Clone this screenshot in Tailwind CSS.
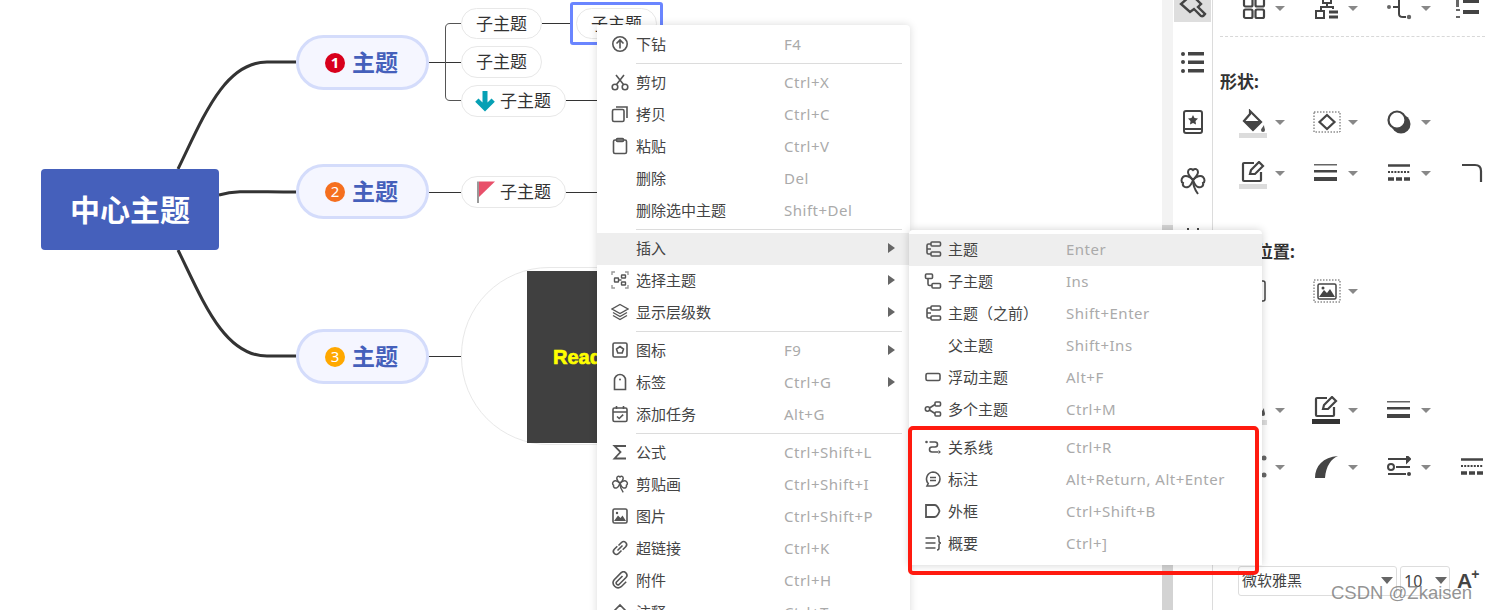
<!DOCTYPE html>
<html lang="zh">
<head>
<meta charset="utf-8">
<script src="https://cdn.jsdelivr.net/npm/@tailwindcss/browser@4"></script>
</head>
<body class="m-0 bg-white">
<div class="relative flex w-[1485px] h-[610px] overflow-hidden bg-white font-['Noto_Sans','Noto_Sans_CJK_SC',sans-serif] text-[#444]">

  <!-- canvas -->
  <div class="relative w-[1162px] h-full shrink-0">
    <svg class="absolute left-0 top-0" width="1162" height="610" fill="none" stroke="#333">
      <path d="M178 169C203 118 224 62 267 62H296" stroke-width="3"/>
      <path d="M219 195C238 190 252 192 296 192" stroke-width="3"/>
      <path d="M178 250C203 301 224 356 267 356H296" stroke-width="3"/>
      <path d="M429 62.500H461M429 192.500H461M429 356.500H461M542 23.500H570M566 100.500H597M566 192.500H597"/>
      <path d="M461 23.500H450Q445.500 23.500 445.500 28V96Q445.500 100.500 450 100.500H461" stroke="#555"/>
    </svg>
    <div class="absolute left-[41px] top-[169px] w-[178px] h-[81px] rounded bg-[#4560bb] flex items-center justify-center text-white text-[30px] font-bold">中心主题</div>

    <div class="absolute left-[296px] top-[35px] w-[133px] h-[55px] rounded-full border-[3px] border-[#d4dcfb] bg-[#f5f6ff] flex items-center justify-center gap-[7px] pr-[2px] text-[#4560bb] text-[23px] font-bold">
      <span class="w-5 h-5 rounded-full bg-[#d8001c] text-white text-[15px] font-bold flex items-center justify-center leading-none">1</span>主题</div>
    <div class="absolute left-[296px] top-[164px] w-[133px] h-[55px] rounded-full border-[3px] border-[#d4dcfb] bg-[#f5f6ff] flex items-center justify-center gap-[7px] pr-[2px] text-[#4560bb] text-[23px] font-bold">
      <span class="w-5 h-5 rounded-full bg-[#f56f1f] text-white text-[15px] font-normal flex items-center justify-center leading-none">2</span>主题</div>
    <div class="absolute left-[296px] top-[329px] w-[133px] h-[55px] rounded-full border-[3px] border-[#d4dcfb] bg-[#f5f6ff] flex items-center justify-center gap-[7px] pr-[2px] text-[#4560bb] text-[23px] font-bold">
      <span class="w-5 h-5 rounded-full bg-[#ffa800] text-white text-[15px] font-normal flex items-center justify-center leading-none">3</span>主题</div>

    <div class="absolute left-[461px] top-[8px] w-[81px] h-[31px] rounded-full border border-[#e8e8e8] bg-white flex items-center justify-center text-[17px] text-[#333]">子主题</div>
    <div class="absolute left-[461px] top-[46px] w-[81px] h-[32px] rounded-full border border-[#e8e8e8] bg-white flex items-center justify-center text-[17px] text-[#333]">子主题</div>
    <div class="absolute left-[461px] top-[85px] w-[105px] h-[32px] rounded-full border border-[#e8e8e8] bg-white flex items-center pl-[11px] gap-[3px] text-[17px] text-[#333]">
      <svg width="24" height="24" viewBox="0 0 24 24" class="shrink-0"><path d="M9.500 2h5v11.500l4-4 3.300 3.300L12 22.500 2.200 12.800 5.500 9.500l4 4z" fill="#06a0b4"/></svg>子主题</div>
    <div class="absolute left-[461px] top-[176px] w-[105px] h-[32px] rounded-full border border-[#e8e8e8] bg-white flex items-center pl-[11px] gap-[3px] text-[17px] text-[#333]">
      <svg width="24" height="24" viewBox="0 0 24 24" class="shrink-0"><path d="M5 1.500V23" stroke="#777" stroke-width="1.500"/><path d="M6 1.500h16L6 17z" fill="#e8506a"/></svg>子主题</div>

    <div class="absolute left-[570px] top-[2px] w-[93px] h-[43px] rounded-[3px] border-[3px] border-[#6a85ff] bg-white pl-[3px] pt-[3px]">
      <div class="w-[81px] h-[31px] rounded-full border border-[#e8e8e8] flex items-center justify-center text-[17px] text-[#333]">子主题</div>
    </div>

    <div class="absolute left-[461px] top-[267px] w-[300px] h-[178px] rounded-l-[88px] border border-[#e8e8e8] bg-white pl-[65px] pt-[3px]">
      <div class="w-[230px] h-[172px] bg-[#404040] flex items-center pl-[26px] text-[20px] font-black text-[#ffff00] [-webkit-text-stroke:0.7px_#ffff00] font-['Liberation_Sans',sans-serif]">ReadMe</div>
    </div>
  </div>

  <!-- scrollbar track -->
  <div class="w-[11px] h-full shrink-0 bg-[#f3f3f3] pt-[225px]"><div class="h-[385px] bg-[#d3d3d3]"></div></div>

  <!-- icon rail -->
  <div class="w-[40px] h-full shrink-0 border-r border-[#dcdcdc] flex flex-col items-center">
    <div class="w-[37px] h-[22px] bg-[#dedede] overflow-hidden">
      <svg width="37" height="22" viewBox="0 0 37 22" fill="none" stroke="#444" stroke-width="2.400"><path d="M15 -3L7 4L16 12L20 9L27 16Q29 17 31 14L24 7L27 4L22 -1"/></svg>
    </div>
    <svg class="mt-[27px]" width="26" height="26" viewBox="0 0 26 26" fill="#444"><circle cx="3" cy="5" r="2"/><circle cx="3" cy="13" r="2"/><circle cx="3" cy="22" r="2"/><rect x="8" y="3" width="16" height="3.500"/><rect x="8" y="11.500" width="16" height="3.500"/><rect x="8" y="20" width="16" height="3.500"/></svg>
    <svg class="mt-[34px]" width="24" height="26" viewBox="0 0 24 26" fill="none" stroke="#444" stroke-width="2"><rect x="3" y="2" width="18" height="22" rx="2"/><path d="M3 20h18"/><path d="M12 6l1.500 3 3.500.5-2.500 2.500.5 3.500-3-1.600-3 1.600.5-3.500L7 9.500l3.500-.5z" fill="#444" stroke="none"/></svg>
    <svg class="mt-[32px]" width="26" height="28" viewBox="0 0 26 28" fill="none" stroke="#444" stroke-width="2"><path d="M13 13C9 9 8 7 8 5C8 2 11 1 13 3C15 1 18 2 18 5C18 7 17 9 13 13Z"/><path d="M13 13C10 9 5 8 3 10C1 12 1 15 3 16C2 19 5 21 8 20C11 19 12 16 13 13Z"/><path d="M13 13C16 9 21 8 23 10C25 12 25 15 23 16C24 19 21 21 18 20C15 19 14 16 13 13Z"/><path d="M13 13C13 18 15 23 18 27"/></svg>
    <svg class="mt-[31px]" width="26" height="12" viewBox="0 0 26 12" fill="none" stroke="#444" stroke-width="2"><path d="M8 2v6M18 2v6"/></svg>
  </div>

  <!-- property panel -->
  <div class="flex-1 h-full flex flex-col">
    <div class="-mt-[6px] h-[28px] pl-[23px] flex items-center">
      <div class="w-[73px] flex items-center"><span class="w-[34px] flex justify-center pl-px"><svg width="24" height="24" viewBox="0 0 24 24" fill="none" stroke="#444" stroke-width="2.200"><rect x="2" y="2" width="8.500" height="8.500" rx="1.500"/><rect x="13.500" y="2" width="8.500" height="8.500" rx="1.500"/><rect x="2" y="13.500" width="8.500" height="8.500" rx="1.500"/><rect x="13.500" y="13.500" width="8.500" height="8.500" rx="1.500"/></svg></span><span class="ml-[5px] w-0 h-0 border-x-[5px] border-x-transparent border-t-[5px] border-t-[#888]"></span></div>
      <div class="w-[73px] flex items-center"><span class="w-[34px] flex justify-center pl-px"><svg width="24" height="24" viewBox="0 0 24 24" fill="none" stroke="#444" stroke-width="2"><rect x="8" y="1" width="8" height="6"/><path d="M12 7v4M6 14v-3h12v2"/><rect x="1" y="15" width="8" height="7"/><path d="M14 16h9M14 21h9" stroke-width="3"/></svg></span><span class="ml-[5px] w-0 h-0 border-x-[5px] border-x-transparent border-t-[5px] border-t-[#888]"></span></div>
      <div class="w-[73px] flex items-center"><span class="w-[34px] flex justify-center"><svg width="26" height="24" viewBox="0 0 26 24" fill="none" stroke="#444" stroke-width="2"><circle cx="3" cy="11" r="2" fill="#666" stroke="none"/><path d="M7 11h6M13 1v17q0 3 4 3h3"/><circle cx="23" cy="21" r="2.200" fill="#666" stroke="none"/></svg></span><span class="ml-[5px] w-0 h-0 border-x-[5px] border-x-transparent border-t-[5px] border-t-[#888]"></span></div>
      <div class="w-[30px] flex items-center"><svg width="24" height="24" viewBox="0 0 24 24" fill="#444"><rect x="8" y="4" width="16" height="3"/><rect x="8" y="14" width="16" height="4"/><path d="M1 3h3v8H1zM1 13h4v2H1zM1 20h4v2H1z" fill="#666"/></svg></div>
    </div>
    <div class="mt-[14px] ml-[7px] h-px border-t border-dashed border-[#d8d8d8]"></div>
    <div class="mt-[34px] ml-[7px] h-[22px] leading-[22px] text-[17px] font-bold text-[#333]">形状:</div>

    <div class="mt-[14px] h-[30px] pl-[23px] flex items-center">
      <div class="w-[73px] flex items-center"><span class="w-[34px] flex flex-col items-center mt-[3px]"><svg width="26" height="24" viewBox="0 0 26 24" fill="none" stroke="#444" stroke-width="2.200"><path d="M10 2l11 11-8 8-9-9 6-7z"/><path d="M4 12h17l-8 9z" fill="#444" stroke="none"/><path d="M24 16c-2 3-3 4-3 5a2 2 0 004 0c0-1-1-3-1-5z" fill="#555" stroke="none"/></svg><span class="w-[28px] h-[5px] bg-[#dcdcdc]"></span></span><span class="ml-[5px] w-0 h-0 border-x-[5px] border-x-transparent border-t-[5px] border-t-[#888]"></span></div>
      <div class="w-[73px] flex items-center"><span class="w-[34px] flex justify-center pl-px"><svg width="28" height="22" viewBox="0 0 28 22" fill="none"><rect x="1" y="1" width="26" height="20" stroke="#555" stroke-dasharray="1.500 1.500"/><path d="M14 4l7.500 7-7.500 7-7.500-7z" stroke="#444" stroke-width="2.200"/></svg></span><span class="ml-[5px] w-0 h-0 border-x-[5px] border-x-transparent border-t-[5px] border-t-[#888]"></span></div>
      <div class="w-[73px] flex items-center"><span class="w-[34px] flex justify-center"><svg width="24" height="24" viewBox="0 0 24 24"><circle cx="14" cy="14" r="9.500" fill="#444"/><circle cx="10" cy="10" r="8.500" fill="#fff" stroke="#444" stroke-width="2.200"/></svg></span><span class="ml-[5px] w-0 h-0 border-x-[5px] border-x-transparent border-t-[5px] border-t-[#888]"></span></div>
    </div>

    <div class="mt-[21px] h-[30px] pl-[23px] flex items-center">
      <div class="w-[73px] flex items-center"><span class="w-[34px] flex flex-col items-center mt-[3px]"><svg width="24" height="22" viewBox="0 0 24 22" fill="none" stroke="#444" stroke-width="2.200"><path d="M13 2H3a1 1 0 00-1 1v16a1 1 0 001 1h16a1 1 0 001-1v-8"/><path d="M9 13l1-4L18 1l4 4-8 8z"/></svg><span class="w-[28px] h-[5px] bg-[#dcdcdc] mt-[1px]"></span></span><span class="ml-[5px] w-0 h-0 border-x-[5px] border-x-transparent border-t-[5px] border-t-[#888]"></span></div>
      <div class="w-[73px] flex items-center"><span class="w-[34px] flex justify-center"><svg width="24" height="20" viewBox="0 0 24 20" fill="#444"><rect y="1" width="23" height="1.500" fill="#666"/><rect y="7" width="23" height="2.500"/><rect y="14" width="23" height="4"/></svg></span><span class="ml-[5px] w-0 h-0 border-x-[5px] border-x-transparent border-t-[5px] border-t-[#888]"></span></div>
      <div class="w-[73px] flex items-center"><span class="w-[34px] flex justify-center"><svg width="24" height="20" viewBox="0 0 24 20" fill="none" stroke="#444"><path d="M1 2.500h22" stroke-width="2.500"/><path d="M1 9h22" stroke-width="2" stroke-dasharray="2 1.200"/><path d="M1 16h22" stroke-width="3.500" stroke-dasharray="6 2"/></svg></span><span class="ml-[5px] w-0 h-0 border-x-[5px] border-x-transparent border-t-[5px] border-t-[#888]"></span></div>
      <div class="w-[30px] flex items-center pl-[6px]"><svg width="22" height="22" viewBox="0 0 22 22" fill="none" stroke="#444" stroke-width="2.200"><path d="M1 3h13q6 0 6 6v11"/></svg></div>
    </div>

    <div class="mt-[53px] ml-[9px] h-[22px] leading-[22px] text-[17px] font-bold text-[#333]">背景位置:</div>

    <div class="mt-[13px] h-[30px] pl-[23px] flex items-center">
      <div class="w-[73px] flex items-center"><span class="w-[34px] flex justify-center"><svg width="28" height="22" viewBox="0 0 28 22" fill="none" stroke="#444"><rect x="4" y="1" width="22" height="20" rx="2" stroke-width="1.500"/><path d="M17 6h6M17 11h6M17 16h6" stroke-width="1.500"/></svg></span></div>
      <div class="w-[73px] flex items-center"><span class="w-[34px] flex justify-center pl-px"><svg width="28" height="24" viewBox="0 0 28 24" fill="none"><rect x="1" y="1" width="26" height="22" stroke="#555" stroke-dasharray="1.500 1.500"/><rect x="5" y="5" width="18" height="15" rx="1.500" stroke="#444" stroke-width="1.500"/><path d="M6 18l5-7 3 3 3-4 5 8z" fill="#444"/><circle cx="10" cy="9" r="1.500" fill="#444"/></svg></span><span class="ml-[5px] w-0 h-0 border-x-[5px] border-x-transparent border-t-[5px] border-t-[#888]"></span></div>
    </div>

    <div class="mt-[89px] h-[30px] pl-[23px] flex items-center">
      <div class="w-[73px] flex items-center"><span class="w-[34px] flex flex-col items-center"><svg width="26" height="24" viewBox="0 0 26 24"><path d="M24 12c-2 3-3 4-3 6a2 2 0 004 0c0-2-1-3-1-6z" fill="#555"/></svg><span class="w-[28px] h-[5px] bg-[#dcdcdc]"></span></span><span class="ml-[5px] w-0 h-0 border-x-[5px] border-x-transparent border-t-[5px] border-t-[#888]"></span></div>
      <div class="w-[73px] flex items-center"><span class="w-[34px] flex flex-col items-center"><svg width="24" height="22" viewBox="0 0 24 22" fill="none" stroke="#444" stroke-width="2.200"><path d="M13 2H3a1 1 0 00-1 1v16a1 1 0 001 1h16a1 1 0 001-1v-8"/><path d="M9 13l1-4L18 1l4 4-8 8z"/></svg><span class="w-[28px] h-[5px] bg-[#333] mt-[1px]"></span></span><span class="ml-[5px] w-0 h-0 border-x-[5px] border-x-transparent border-t-[5px] border-t-[#888]"></span></div>
      <div class="w-[73px] flex items-center"><span class="w-[34px] flex justify-center"><svg width="24" height="20" viewBox="0 0 24 20" fill="#444"><rect y="1" width="23" height="1.500" fill="#666"/><rect y="7" width="23" height="2.500"/><rect y="14" width="23" height="4"/></svg></span><span class="ml-[5px] w-0 h-0 border-x-[5px] border-x-transparent border-t-[5px] border-t-[#888]"></span></div>
    </div>

    <div class="mt-[27px] h-[30px] pl-[23px] flex items-center">
      <div class="w-[73px] flex items-center"><span class="w-[34px] flex justify-center"><svg width="30" height="24" viewBox="0 0 30 24" fill="#666"><circle cx="26" cy="3" r="2.500"/><circle cx="26" cy="20" r="2.500"/></svg></span><span class="ml-[5px] w-0 h-0 border-x-[5px] border-x-transparent border-t-[5px] border-t-[#888]"></span></div>
      <div class="w-[73px] flex items-center"><span class="w-[34px] flex justify-center"><svg width="26" height="24" viewBox="0 0 26 24" fill="#444"><path d="M2 23C2 11 10 2 25 1c-7 3-12 10-13 22z"/></svg></span><span class="ml-[5px] w-0 h-0 border-x-[5px] border-x-transparent border-t-[5px] border-t-[#888]"></span></div>
      <div class="w-[73px] flex items-center"><span class="w-[34px] flex justify-center"><svg width="24" height="22" viewBox="0 0 24 22" fill="none" stroke="#444" stroke-width="2"><path d="M1 3h19"/><path d="M20 0l3 3-3 3z" fill="#444"/><circle cx="4" cy="11" r="3"/><path d="M9 11h14M1 18h18"/><circle cx="22" cy="18" r="2" fill="#444" stroke="none"/></svg></span><span class="ml-[5px] w-0 h-0 border-x-[5px] border-x-transparent border-t-[5px] border-t-[#888]"></span></div>
      <div class="w-[30px] flex items-center pl-[5px]"><svg width="24" height="20" viewBox="0 0 24 20" fill="none" stroke="#444"><path d="M1 2.500h22" stroke-width="2.500"/><path d="M1 9h22" stroke-width="2" stroke-dasharray="2 1.200"/><path d="M1 16h22" stroke-width="3.500" stroke-dasharray="6 2"/></svg></div>
    </div>

    <div class="mt-[83px] h-[31px] pl-[25px] flex items-center gap-[3px]">
      <div class="w-[159px] h-[30px] rounded-[3px] border border-[#ddd] flex items-center justify-between pl-[3px] pr-[3px] text-[15px] text-[#444]">微软雅黑<span class="w-0 h-0 border-x-[6px] border-x-transparent border-t-[7px] border-t-[#666]"></span></div>
      <div class="w-[50px] h-[30px] rounded-[3px] border border-[#ddd] flex items-center justify-between pl-[3px] pr-[2px] text-[16px] text-[#444]">10<span class="w-0 h-0 border-x-[6px] border-x-transparent border-t-[7px] border-t-[#666]"></span></div>
      <div class="ml-[4px] flex items-start font-bold text-[#444] leading-none text-[21px] font-['Liberation_Sans',sans-serif]">A<span class="text-[14px] -mt-[3px] -ml-[1px]">+</span></div>
    </div>
  </div>

  <!-- context menu -->
  <div class="absolute left-[597px] top-[25px] w-[313px] h-[600px] bg-white rounded-tr shadow-[0_0_8px_rgba(0,0,0,0.15)] pt-1 text-[15px]">
    <div class="flex items-center h-8 pb-[2px]"><span class="w-[39px] pl-[14px]"><svg width="18" height="18" viewBox="0 0 18 18" fill="none" stroke="#555" stroke-width="1.600"><circle cx="9" cy="9" r="7.200"/><path d="M9 13.500V5M5.500 8.500L9 5l3.500 3.500"/></svg></span><span class="w-[148px]">下钻</span><span class="tracking-[0.5px] text-[#aaa]">F4</span></div>
    <div class="h-[6px] ml-[39px] mr-2 pt-[2px]"><div class="h-px bg-[#dcdcdc]"></div></div>
    <div class="flex items-center h-8 pb-[2px]"><span class="w-[39px] pl-[14px]"><svg width="18" height="18" viewBox="0 0 18 18" fill="none" stroke="#555" stroke-width="1.600"><circle cx="4" cy="14" r="2.800"/><circle cx="14" cy="14" r="2.800"/><path d="M5.500 11.500L13 2M12.500 11.500L5 2"/></svg></span><span class="w-[148px]">剪切</span><span class="tracking-[0.5px] text-[#aaa]">Ctrl+X</span></div>
    <div class="flex items-center h-8 pb-[2px]"><span class="w-[39px] pl-[14px]"><svg width="18" height="18" viewBox="0 0 18 18" fill="none" stroke="#555" stroke-width="1.600"><rect x="1.500" y="4.500" width="11.500" height="12" rx="1.500"/><path d="M5 2h11v11"/></svg></span><span class="w-[148px]">拷贝</span><span class="tracking-[0.5px] text-[#aaa]">Ctrl+C</span></div>
    <div class="flex items-center h-8 pb-[2px]"><span class="w-[39px] pl-[14px]"><svg width="18" height="18" viewBox="0 0 18 18" fill="none" stroke="#555" stroke-width="1.600"><rect x="2.500" y="3" width="13" height="13.500" rx="1.500"/><rect x="5.500" y="1.500" width="7" height="3" rx="1"/></svg></span><span class="w-[148px]">粘贴</span><span class="tracking-[0.5px] text-[#aaa]">Ctrl+V</span></div>
    <div class="flex items-center h-8 pb-[2px]"><span class="w-[39px]"></span><span class="w-[148px]">删除</span><span class="tracking-[0.5px] text-[#aaa]">Del</span></div>
    <div class="flex items-center h-8 pb-[2px]"><span class="w-[39px]"></span><span class="w-[148px]">删除选中主题</span><span class="tracking-[0.5px] text-[#aaa]">Shift+Del</span></div>
    <div class="h-[6px] ml-[39px] mr-2 pt-[2px]"><div class="h-px bg-[#dcdcdc]"></div></div>
    <div class="flex items-center h-8 pb-[2px] bg-[#eeeeee]"><span class="w-[39px]"></span><span class="flex-1">插入</span><span class="mr-[15px] w-0 h-0 border-y-[5px] border-y-transparent border-l-[7px] border-l-[#666]"></span></div>
    <div class="flex items-center h-8 pb-[2px]"><span class="w-[39px] pl-[14px]"><svg width="18" height="18" viewBox="0 0 18 18" fill="none" stroke="#555" stroke-width="1.400"><path d="M1 4V1h3M14 1h3v3M17 14v3h-3M4 17H1v-3" stroke="#999"/><rect x="3.500" y="7" width="4" height="4" rx=".5"/><rect x="10.500" y="4" width="4" height="3" rx=".5"/><rect x="10.500" y="11" width="4" height="3" rx=".5"/><path d="M7.500 9h3"/></svg></span><span class="flex-1">选择主题</span><span class="mr-[15px] w-0 h-0 border-y-[5px] border-y-transparent border-l-[7px] border-l-[#666]"></span></div>
    <div class="flex items-center h-8 pb-[2px]"><span class="w-[39px] pl-[14px]"><svg width="18" height="18" viewBox="0 0 18 18" fill="none" stroke="#555" stroke-width="1.400"><path d="M9 1.500l8 4.500-8 4.500L1 6z"/><path d="M2 9.500l7 4 7-4M2 12.500l7 4 7-4"/></svg></span><span class="flex-1">显示层级数</span><span class="mr-[15px] w-0 h-0 border-y-[5px] border-y-transparent border-l-[7px] border-l-[#666]"></span></div>
    <div class="h-[6px] ml-[39px] mr-2 pt-[2px]"><div class="h-px bg-[#dcdcdc]"></div></div>
    <div class="flex items-center h-8 pb-[2px]"><span class="w-[39px] pl-[14px]"><svg width="18" height="18" viewBox="0 0 18 18" fill="none" stroke="#555" stroke-width="1.600"><rect x="2" y="2" width="14" height="14" rx="1.500"/><path d="M9 5.500l3.500 2.500-1.300 4H6.800L5.500 8z"/></svg></span><span class="w-[148px]">图标</span><span class="flex-1 tracking-[0.5px] text-[#aaa]">F9</span><span class="mr-[15px] w-0 h-0 border-y-[5px] border-y-transparent border-l-[7px] border-l-[#666]"></span></div>
    <div class="flex items-center h-8 pb-[2px]"><span class="w-[39px] pl-[14px]"><svg width="18" height="18" viewBox="0 0 18 18" fill="none" stroke="#555" stroke-width="1.600"><path d="M3.500 7a5.500 5.500 0 0111 0v9.500h-11z"/><circle cx="9" cy="6.500" r="1" fill="#555" stroke="none"/></svg></span><span class="w-[148px]">标签</span><span class="flex-1 tracking-[0.5px] text-[#aaa]">Ctrl+G</span><span class="mr-[15px] w-0 h-0 border-y-[5px] border-y-transparent border-l-[7px] border-l-[#666]"></span></div>
    <div class="flex items-center h-8 pb-[2px]"><span class="w-[39px] pl-[14px]"><svg width="18" height="18" viewBox="0 0 18 18" fill="none" stroke="#555" stroke-width="1.600"><rect x="2" y="3" width="14" height="13.500" rx="1.500"/><path d="M2 7h14M5.500 1v3M12.500 1v3M6 11.500l2.200 2 4-3.800"/></svg></span><span class="w-[148px]">添加任务</span><span class="tracking-[0.5px] text-[#aaa]">Alt+G</span></div>
    <div class="h-[6px] ml-[39px] mr-2 pt-[2px]"><div class="h-px bg-[#dcdcdc]"></div></div>
    <div class="flex items-center h-8 pb-[2px]"><span class="w-[39px] pl-[14px]"><svg width="18" height="18" viewBox="0 0 18 18" fill="none" stroke="#555" stroke-width="1.800"><path d="M15 3H3.500l6 6-6 6.500H15"/></svg></span><span class="w-[148px]">公式</span><span class="tracking-[0.5px] text-[#aaa]">Ctrl+Shift+L</span></div>
    <div class="flex items-center h-8 pb-[2px]"><span class="w-[39px] pl-[14px]"><svg width="18" height="18" viewBox="0 0 26 28" fill="none" stroke="#555" stroke-width="2.300"><path d="M13 13C9 9 8 7 8 5C8 2 11 1 13 3C15 1 18 2 18 5C18 7 17 9 13 13Z"/><path d="M13 13C10 9 5 8 3 10C1 12 1 15 3 16C2 19 5 21 8 20C11 19 12 16 13 13Z"/><path d="M13 13C16 9 21 8 23 10C25 12 25 15 23 16C24 19 21 21 18 20C15 19 14 16 13 13Z"/><path d="M13 13C13 18 15 23 18 27"/></svg></span><span class="w-[148px]">剪贴画</span><span class="tracking-[0.5px] text-[#aaa]">Ctrl+Shift+I</span></div>
    <div class="flex items-center h-8 pb-[2px]"><span class="w-[39px] pl-[14px]"><svg width="18" height="18" viewBox="0 0 18 18" fill="none" stroke="#555" stroke-width="1.600"><rect x="2" y="2" width="14" height="14" rx="1.500"/><path d="M3 14l4-5.500 2.500 2.500 2-2.500 3.500 5.500z" fill="#555" stroke="none"/><circle cx="6" cy="6" r="1.200" fill="#555" stroke="none"/></svg></span><span class="w-[148px]">图片</span><span class="tracking-[0.5px] text-[#aaa]">Ctrl+Shift+P</span></div>
    <div class="flex items-center h-8 pb-[2px]"><span class="w-[39px] pl-[14px]"><svg width="18" height="18" viewBox="0 0 18 18" fill="none" stroke="#555" stroke-width="1.600"><path d="M7.500 6.500l3-3a3 3 0 014.200 0v0a3 3 0 010 4.200l-3 3M10.500 11.500l-3 3a3 3 0 01-4.200 0v0a3 3 0 010-4.200l3-3M6.500 11.500l5-5"/></svg></span><span class="w-[148px]">超链接</span><span class="tracking-[0.5px] text-[#aaa]">Ctrl+K</span></div>
    <div class="flex items-center h-8 pb-[2px]"><span class="w-[39px] pl-[14px]"><svg width="18" height="18" viewBox="0 0 18 18" fill="none" stroke="#555" stroke-width="1.600"><path d="M11.500 5l-6 6a1.800 1.800 0 002.500 2.500l7-7a3.400 3.400 0 00-4.800-4.800l-7 7a5 5 0 007 7l5-5"/></svg></span><span class="w-[148px]">附件</span><span class="tracking-[0.5px] text-[#aaa]">Ctrl+H</span></div>
    <div class="flex items-center h-8 pb-[2px]"><span class="w-[39px] pl-[14px]"><svg width="18" height="18" viewBox="0 0 18 18" fill="none" stroke="#555" stroke-width="1.600"><path d="M2 9l7-7 7 7v7H2z"/></svg></span><span class="w-[148px]">注释</span><span class="tracking-[0.5px] text-[#aaa]">Ctrl+T</span></div>
  </div>

  <!-- submenu -->
  <div class="absolute left-[909px] top-[230px] w-[353px] h-[335px] bg-white rounded-t shadow-[0_0_8px_rgba(0,0,0,0.18)] pt-1 text-[15px]">
    <div class="flex items-center h-8 pb-[2px] bg-[#eeeeee]"><span class="w-[39px] pl-[15px]"><svg width="18" height="18" viewBox="0 0 18 18" fill="none" stroke="#555" stroke-width="1.600"><rect x="7" y="2" width="9.500" height="4" rx="1"/><rect x="7" y="12" width="9.500" height="4" rx="1"/><path d="M7 4H4.500Q3 4 3 5.500v7Q3 14 4.500 14H7M3 9h4"/></svg></span><span class="w-[118px] text-[#444]">主题</span><span class="tracking-[0.5px] text-[#aaa]">Enter</span></div>
    <div class="flex items-center h-8 pb-[2px]"><span class="w-[39px] pl-[15px]"><svg width="18" height="18" viewBox="0 0 18 18" fill="none" stroke="#555" stroke-width="1.600"><rect x="1.500" y="2" width="7" height="4.500" rx="1"/><rect x="8" y="11.500" width="8.500" height="4.500" rx="1"/><path d="M4 6.500v5.500q0 1.500 1.500 1.500H8"/></svg></span><span class="w-[118px]">子主题</span><span class="tracking-[0.5px] text-[#aaa]">Ins</span></div>
    <div class="flex items-center h-8 pb-[2px]"><span class="w-[39px] pl-[15px]"><svg width="18" height="18" viewBox="0 0 18 18" fill="none" stroke="#555" stroke-width="1.600"><rect x="7" y="2" width="9.500" height="4" rx="1"/><rect x="7" y="12" width="9.500" height="4" rx="1"/><path d="M7 4H4.500Q3 4 3 5.500v7Q3 14 4.500 14H7M3 9h4"/></svg></span><span class="w-[118px]">主题（之前）</span><span class="tracking-[0.5px] text-[#aaa]">Shift+Enter</span></div>
    <div class="flex items-center h-8 pb-[2px]"><span class="w-[39px]"></span><span class="w-[118px]">父主题</span><span class="tracking-[0.5px] text-[#aaa]">Shift+Ins</span></div>
    <div class="flex items-center h-8 pb-[2px]"><span class="w-[39px] pl-[15px]"><svg width="18" height="18" viewBox="0 0 18 18" fill="none" stroke="#555" stroke-width="1.600"><rect x="2" y="5.500" width="14" height="7" rx="1.500"/></svg></span><span class="w-[118px]">浮动主题</span><span class="tracking-[0.5px] text-[#aaa]">Alt+F</span></div>
    <div class="flex items-center h-8 pb-[2px]"><span class="w-[39px] pl-[15px]"><svg width="18" height="18" viewBox="0 0 18 18" fill="none" stroke="#555" stroke-width="1.600"><circle cx="3.500" cy="9" r="2.200"/><rect x="11" y="2" width="5.500" height="4" rx="1"/><rect x="11" y="12" width="5.500" height="4" rx="1"/><path d="M5.500 8L11 4.500M5.500 10L11 13.500"/></svg></span><span class="w-[118px]">多个主题</span><span class="tracking-[0.5px] text-[#aaa]">Ctrl+M</span></div>
    <div class="h-[6px]"></div>
    <div class="flex items-center h-8 pb-[2px]"><span class="w-[39px] pl-[15px]"><svg width="18" height="18" viewBox="0 0 18 18" fill="none" stroke="#555" stroke-width="1.600"><circle cx="2.500" cy="4" r="1.300" fill="#555" stroke="none"/><path d="M5.500 4H11q2.500 0 2.500 2.500T11 9H8q-2.500 0-2.500 2.500T8 14h6"/><path d="M14.500 12l2.500 2-2.500 2z" fill="#555" stroke="none"/></svg></span><span class="w-[118px]">关系线</span><span class="tracking-[0.5px] text-[#aaa]">Ctrl+R</span></div>
    <div class="flex items-center h-8 pb-[2px]"><span class="w-[39px] pl-[15px]"><svg width="18" height="18" viewBox="0 0 18 18" fill="none" stroke="#555" stroke-width="1.600"><path d="M9 2a7 7 0 110 14H3l1.200-2.500A7 7 0 019 2z"/><path d="M6 7.500h6M6 10.500h6"/></svg></span><span class="w-[118px]">标注</span><span class="tracking-[0.5px] text-[#aaa]">Alt+Return, Alt+Enter</span></div>
    <div class="flex items-center h-8 pb-[2px]"><span class="w-[39px] pl-[15px]"><svg width="18" height="18" viewBox="0 0 18 18" fill="none" stroke="#555" stroke-width="1.800"><path d="M2 3h8.500q3 0 5 6-2 6-5 6H2z"/></svg></span><span class="w-[118px]">外框</span><span class="tracking-[0.5px] text-[#aaa]">Ctrl+Shift+B</span></div>
    <div class="flex items-center h-8 pb-[2px]"><span class="w-[39px] pl-[15px]"><svg width="18" height="18" viewBox="0 0 18 18" fill="none" stroke="#555" stroke-width="1.500"><path d="M1.500 4h10M1.500 9h10M1.500 14h10M13 2q2 0 2 2v3q0 2 2 2-2 0-2 2v3q0 2-2 2"/></svg></span><span class="w-[118px]">概要</span><span class="tracking-[0.5px] text-[#aaa]">Ctrl+]</span></div>
  </div>

  <!-- red annotation -->
  <div class="absolute left-[908px] top-[426px] w-[351px] h-[149px] rounded-[5px] border-4 border-[#ff1a0f]"></div>

  <!-- watermark -->
  <div class="absolute left-[1331px] top-[581px] text-[18.5px] leading-6 text-[#777]/80 font-['Liberation_Sans',sans-serif]">CSDN @Zkaisen</div>
</div>
</body>
</html>
